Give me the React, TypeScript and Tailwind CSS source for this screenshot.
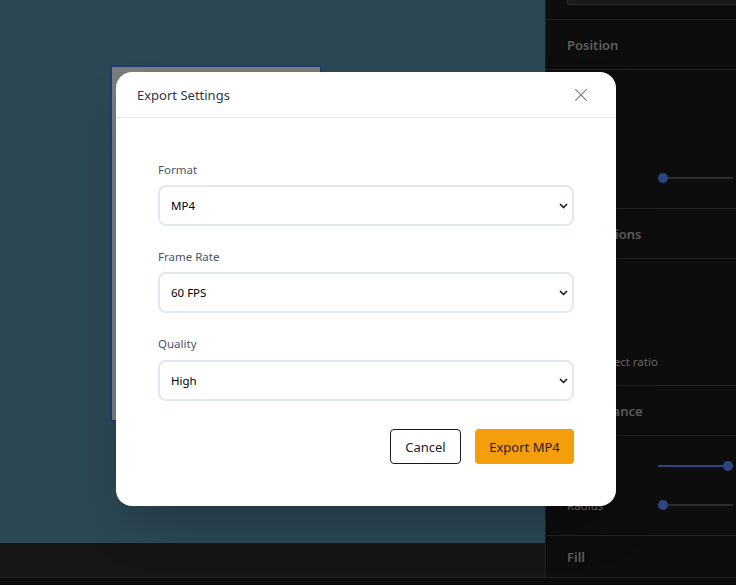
import React from "react";

const FONT = "font-['Noto_Sans','Open_Sans',sans-serif]";

const SectionHeader = ({ title }: { title: string }) => (
  <div className="h-[50px] flex items-center pt-[2px] px-[21px] border-b border-[#232323] text-[13px] font-semibold text-[#5f5f5f]">
    {title}
  </div>
);

// track is 75px wide, the thumb centre runs from 5px to 70px
const Slider = ({ value, className }: { value: number; className: string }) => {
  const pos = 5 + (value / 100) * 65;
  return (
    <div className={`relative ml-[112px] w-[75px] h-[2px] bg-[#2c2c2c] ${className}`}>
      <div className="h-full bg-[#2b4680]" style={{ width: pos }} />
      <div
        className="absolute top-[-4px] -ml-[5px] w-[10px] h-[10px] rounded-full bg-[#2b4680]"
        style={{ left: pos }}
      />
    </div>
  );
};

const Field = ({ label, value, options, gap, className }: { label: string; value: string; options: string[]; gap: string; className?: string }) => (
  <div className={className}>
    <label className={`block text-[11.5px] leading-[16px] text-[#4a5568] ${gap}`}>{label}</label>
    <div className="relative">
      <select
        defaultValue={value}
        className="block w-full h-[41px] appearance-none bg-white border-2 border-[#e2e8f0] rounded-lg pl-[11px] pr-[4px] text-[11.5px] text-black outline-none"
      >
        {options.map((o) => (
          <option key={o}>{o}</option>
        ))}
      </select>
      <svg className="absolute right-[6px] top-[18px]" width="9" height="6" viewBox="0 0 9 6" fill="none" stroke="#111" strokeWidth="1.5">
        <path d="M1 1 L4.5 4.5 L8 1" />
      </svg>
    </div>
  </div>
);

export default function App() {
  return (
    <div className={`relative w-[736px] h-[585px] overflow-hidden bg-[#0b0b0b] ${FONT}`}>
      <div className="flex h-[577px] border-b border-[#212121] box-content">
        <div className="flex-1 flex flex-col">
          <div className="relative flex-1 bg-[#2c4854]">
            {/* artboard on the canvas */}
            <div className="absolute left-[110px] top-[65px] w-[212px] h-[357px] bg-[#7b7b7b] border-2 border-[#1f3d74]" />
          </div>
          <div className="h-[34px] bg-[#161616]" />
        </div>
        <div className="w-[191px] shrink-0 border-l border-[#1f1f1f] bg-[#0d0d0d] flex flex-col">
          <div className="h-[20px] border-b border-[#232323] pl-[21px]">
            <div className="h-[5px] -mr-[10px] bg-[#1a1a1a] border border-t-0 border-[#2c2c2c] rounded-b-[3px]" />
          </div>
          <SectionHeader title="Position" />
          <div className="h-[139px] border-b border-[#232323] pt-[107px]">
            <Slider value={0} className="" />
          </div>
          <SectionHeader title="Dimensions" />
          <div className="h-[127px] border-b border-[#232323] px-[21px] pt-[95px] text-[11.5px] leading-[16px] text-[#6b6b6b]">
            Lock aspect ratio
          </div>
          <SectionHeader title="Appearance" />
          <div className="relative h-[100px] border-b border-[#232323] pt-[29px]">
            <Slider value={100} className="" />
            <Slider value={0} className="mt-[37px]" />
            <div className="absolute left-[21px] top-[62px] text-[11.5px] leading-[16px] text-[#6b6b6b]">Radius</div>
          </div>
          <div className="flex-1 flex items-center pt-[2px] px-[21px] text-[13px] font-semibold text-[#5f5f5f]">Fill</div>
        </div>
      </div>

      {/* export dialog */}
      <div className="absolute left-[116px] top-[72px] w-[500px] h-[434px] bg-white rounded-2xl shadow-2xl flex flex-col">
        <div className="h-[46px] shrink-0 flex items-center justify-between pl-[21px] pr-[29px] border-b border-[#e2e8f0]">
          <h2 className="pt-[2px] text-[13px] text-[#2d3748]">Export Settings</h2>
          <svg width="12" height="12" viewBox="0 0 12 12" fill="none" stroke="#718096" strokeWidth="1.1">
            <path d="M0.3 0.3 L11.7 11.7 M11.7 0.3 L0.3 11.7" />
          </svg>
        </div>
        <div className="flex-1 px-[42px] pt-[44px]">
          <Field label="Format" value="MP4" options={["MP4", "WebM", "GIF"]} gap="mb-[7px]" />
          <Field label="Frame Rate" value="60 FPS" options={["24 FPS", "30 FPS", "60 FPS"]} gap="mb-[7px]" className="mt-[23px]" />
          <Field label="Quality" value="High" options={["Low", "Medium", "High"]} gap="mb-[8px]" className="mt-[23px]" />
          <div className="flex justify-end gap-[14px] mt-[28px]">
            <button className="w-[71px] h-[35px] pt-[2px] rounded border border-[#1a1a1a] bg-white text-[13px] text-[#1a202c]">Cancel</button>
            <button className="w-[99px] h-[35px] pt-[2px] rounded bg-[#f59e0b] text-[13px] text-[#1a202c]">Export MP4</button>
          </div>
        </div>
      </div>
    </div>
  );
}
